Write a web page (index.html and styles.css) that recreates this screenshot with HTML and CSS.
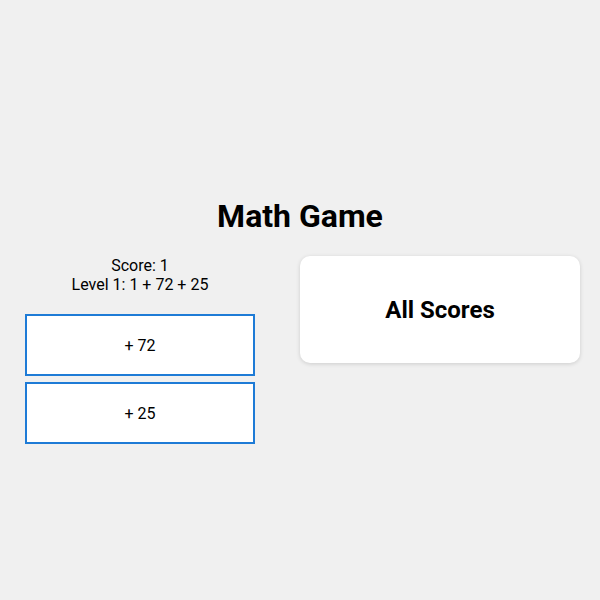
FILE: index.html
```html
<!DOCTYPE html>
<html>
<head>
<meta charset="utf-8">
<link rel="stylesheet" href="styles.css">
</head>
<body>
<div class="app">
  <h1 class="title">Math Game</h1>
  <div class="row">
    <div class="game">
      <div class="status">
        <div>Score: 1</div>
        <div>Level 1: 1 + 72 + 25</div>
      </div>
      <div class="choices">
        <div class="choice">+ 72</div>
        <div class="choice">+ 25</div>
      </div>
    </div>
    <div class="scores-card">All Scores</div>
  </div>
</div>
</body>
</html>
```
FILE: styles.css
```css
html, body {
  margin: 0;
  padding: 0;
  background: #f0f0f0;
  font-family: Roboto, "Liberation Sans", sans-serif;
  color: #000;
}
.app {
  padding-top: 198px;
}
.title {
  margin: 0;
  text-align: center;
  font-size: 32px;
  line-height: 37px;
  font-weight: 700;
}
.row {
  display: flex;
  align-items: flex-start;
  margin-top: 21px;
  padding-left: 25px;
  gap: 45px;
}
.game {
  width: 230px;
}
.status {
  text-align: center;
  font-size: 16px;
  line-height: 19px;
}
.choices {
  margin-top: 20px;
  display: flex;
  flex-direction: column;
  gap: 6px;
}
.choice {
  box-sizing: border-box;
  height: 62px;
  border: 2px solid #1e7bd6;
  background: #fff;
  display: flex;
  align-items: center;
  justify-content: center;
  font-size: 16px;
}
.scores-card {
  box-sizing: border-box;
  width: 280px;
  height: 107px;
  background: #fff;
  border-radius: 10px;
  box-shadow: 0 1px 4px rgba(0,0,0,0.15);
  display: flex;
  align-items: center;
  justify-content: center;
  font-size: 24px;
  font-weight: 700;
}
```
